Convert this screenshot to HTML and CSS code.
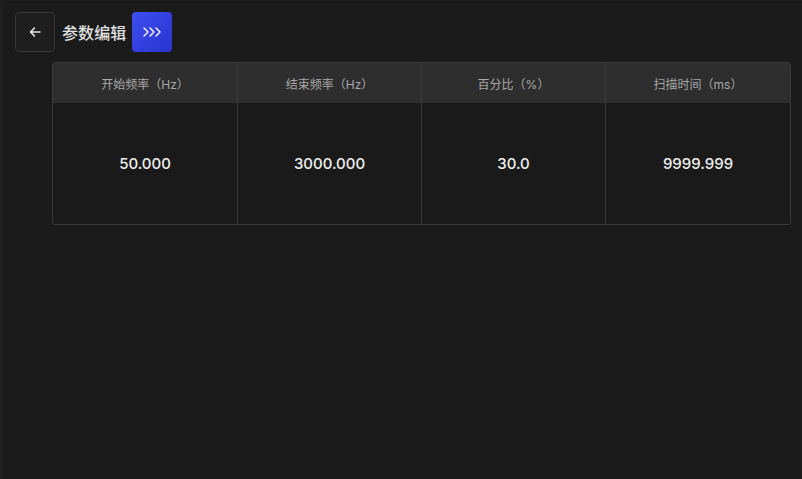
FILE: index.html
```html
<!DOCTYPE html>
<html lang="zh">
<head>
<meta charset="utf-8">
<link rel="stylesheet" href="styles.css">
</head>
<body>
<div class="page">
  <div class="toolbar">
    <button class="btn back" type="button">
      <svg width="14" height="14" viewBox="0 0 14 14"><path d="M12 7H2.5M6.5 3L2.5 7l4 4" fill="none" stroke="#e6e6e6" stroke-width="1.6" stroke-linecap="round" stroke-linejoin="round"/></svg>
    </button>
    <span class="title">参数编辑</span>
    <button class="btn next" type="button">
      <svg width="20" height="12" viewBox="0 0 20 12"><path d="M2 2l4 4-4 4M8 2l4 4-4 4M14 2l4 4-4 4" fill="none" stroke="#ffffff" stroke-width="1.4" stroke-linecap="round" stroke-linejoin="round"/></svg>
    </button>
  </div>
  <div class="table">
    <div class="cell head">开始频率（Hz）</div>
    <div class="cell head">结束频率（Hz）</div>
    <div class="cell head">百分比（%）</div>
    <div class="cell head">扫描时间（ms）</div>
    <div class="cell val">50.000</div>
    <div class="cell val">3000.000</div>
    <div class="cell val">30.0</div>
    <div class="cell val">9999.999</div>
  </div>
</div>
</body>
</html>
```
FILE: styles.css
```css
html, body {
  margin: 0;
  padding: 0;
  height: 100%;
  background: #1b1b1b;
}
body {
  font-family: Inter, "Noto Sans CJK SC", sans-serif;
  color: #e8e8e8;
}
.page {
  box-sizing: border-box;
  height: 100%;
  border-left: 3px solid #202020;
  border-top: 1px solid #202020;
  padding: 11px 12px 0 12px;
}
.toolbar {
  display: flex;
  align-items: center;
  height: 40px;
}
.btn {
  box-sizing: border-box;
  width: 40px;
  height: 40px;
  border-radius: 4px;
  display: flex;
  align-items: center;
  justify-content: center;
  padding: 0;
  cursor: pointer;
}
.back {
  background: #1e1e1e;
  border: 1px solid #383838;
}
.next {
  background: linear-gradient(135deg, #3d4ef0, #2a34cf);
  border: none;
  margin-left: 6px;
}
.title {
  margin-left: 7px;
  font-size: 16px;
  font-weight: 500;
  color: #e2e2e2;
  letter-spacing: 0.1px;
}
.table {
  margin: 10px 0 0 37px;
  width: 737px;
  display: grid;
  grid-template-columns: 184px 184px 184px 185px;
  grid-template-rows: 40px 121px;
  border: 1px solid #3a3a3a;
  border-radius: 3px;
  overflow: hidden;
}
.cell {
  display: flex;
  align-items: center;
  justify-content: center;
  border-left: 1px solid #3a3a3a;
}
.cell:nth-child(4n+1) {
  border-left: none;
}
.head {
  background: #2e2e2e;
  font-size: 12px;
  color: #a8a8a8;
}
.val {
  background: #1a1a1a;
  font-size: 15px;
  font-weight: 500;
  color: #f0f0f0;
}
```
